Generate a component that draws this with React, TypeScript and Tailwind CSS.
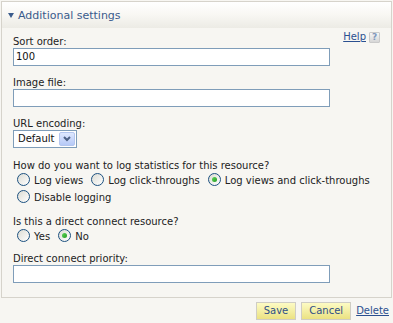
import React from 'react'

const font = { fontFamily: '"DejaVu Sans", Verdana, sans-serif' }

function Radio({ checked }: { checked?: boolean }) {
  return (
    <span className="ml-[4px] mr-[4px] flex h-[13px] w-[13px] shrink-0 items-center justify-center rounded-full border border-[#1c5180] bg-gradient-to-br from-[#dcdcd4] to-[#ffffff]">
      {checked && (
        <span className="h-[5px] w-[5px] rounded-full bg-gradient-to-br from-[#5fd55a] to-[#1f9c1f]" />
      )}
    </span>
  )
}

function Option({ label, checked }: { label: string; checked?: boolean }) {
  return (
    <label className="mr-[4px] flex items-center">
      <Radio checked={checked} />
      <span className="leading-[12px] pt-[2px]">{label}</span>
    </label>
  )
}

function Field({ label }: { label: string }) {
  return <div className="leading-[12px]">{label}</div>
}

function TextBox({ value }: { value?: string }) {
  return (
    <div className="flex h-[18px] w-[317px] items-center border border-[#7f9db9] bg-white px-[2px] text-[10px] leading-[12px] text-[#111]">
      {value}
    </div>
  )
}

function Button({ children }: { children: React.ReactNode }) {
  return (
    <button className="flex h-[18px] items-center border border-[#cfcdc4] bg-gradient-to-b from-[#fdfbc4] to-[#ebe281] px-[7px] text-[10px] leading-[12px] text-[#2f4f86]">
      {children}
    </button>
  )
}

export default function App() {
  return (
    <div className="h-[323px] w-[393px] bg-[#f7f6f2] pt-px text-[10px] text-[#222]" style={font}>
      <div className="mx-px border border-[#d6d3cb]">
        {/* header */}
        <div className="flex h-[26px] items-center bg-gradient-to-b from-[#ffffff] via-[#f8f7f3] to-[#ecebe5] pl-[6px] pt-px">
          <svg width="6" height="5" viewBox="0 0 6 5" className="mr-[4px]">
            <path d="M0 0 H6 L3 5 Z" fill="#3c5c8c" />
          </svg>
          <span className="text-[11px] leading-[13px] text-[#3a5b8c]">Additional settings</span>
        </div>

        {/* body */}
        <div className="px-[11px] pb-[14px] pt-[3px]">
          <div className="flex items-end justify-between">
            <Field label="Sort order:" />
            <div className="mb-[5px] flex items-center">
              <a href="#" className="leading-[12px] text-[#2b5090] underline">Help</a>
              <span className="ml-[3px] flex h-[11px] w-[11px] items-center justify-center rounded-[1px] border border-[#cacaca] bg-gradient-to-b from-[#f6f6f6] to-[#d6d6d6] text-[9px] font-bold leading-[9px] text-[#8099bd]">?</span>
            </div>
          </div>
          <TextBox value="100" />

          <div className="mt-[11px]">
            <Field label="Image file:" />
          </div>
          <TextBox />

          <div className="mt-[11px]">
            <Field label="URL encoding:" />
          </div>
          <div className="flex h-[18px] w-[64px] items-center justify-between border border-[#7f9db9] bg-white pl-[4px] pr-px">
            <span className="leading-[12px] text-[#111]">Default</span>
            <span className="flex h-[14px] w-[16px] items-center justify-center rounded-[2px] border border-[#b4c6ef] bg-gradient-to-b from-[#dfe8fe] to-[#b6c9f7]">
              <svg width="8" height="6" viewBox="0 0 8 6">
                <path d="M1 1 L4 4 L7 1" fill="none" stroke="#4d6185" strokeWidth="2" />
              </svg>
            </span>
          </div>

          <div className="mt-[12px]">
            <Field label="How do you want to log statistics for this resource?" />
          </div>
          <div className="flex h-[15px] items-center">
            <Option label="Log views" />
            <Option label="Log click-throughs" />
            <Option label="Log views and click-throughs" checked />
          </div>
          <div className="mt-[2px] flex h-[15px] items-center">
            <Option label="Disable logging" />
          </div>

          <div className="mt-[12px]">
            <Field label="Is this a direct connect resource?" />
          </div>
          <div className="flex h-[15px] items-center">
            <Option label="Yes" />
            <Option label="No" checked />
          </div>

          <div className="mt-[10px]">
            <Field label="Direct connect priority:" />
          </div>
          <TextBox />
        </div>
      </div>

      {/* actions */}
      <div className="mt-[4px] flex items-center justify-end gap-[5px] pr-[4px]">
        <Button>Save</Button>
        <Button>Cancel</Button>
        <a href="#" className="leading-[12px] text-[#2b5090] underline">Delete</a>
      </div>
    </div>
  )
}
